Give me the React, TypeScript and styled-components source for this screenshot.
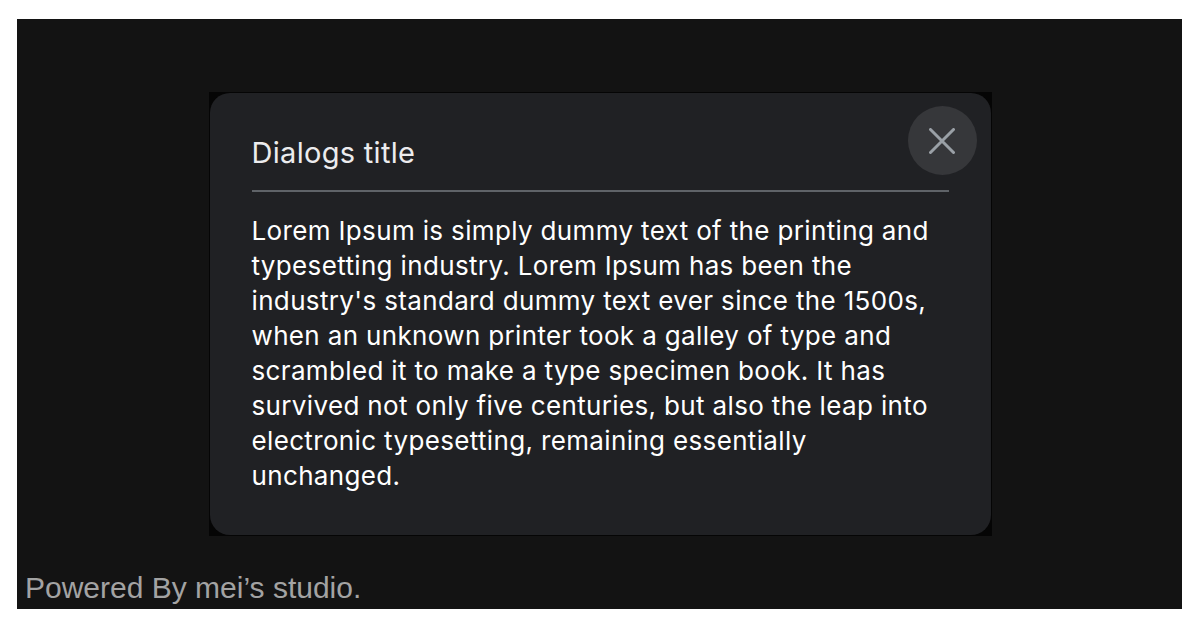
import styled, { createGlobalStyle } from "styled-components";

const GlobalStyle = createGlobalStyle`
  html, body {
    margin: 0;
    padding: 0;
    background: #ffffff;
  }
  body {
    font-family: Inter, "Noto Sans", sans-serif;
  }
`;

const Page = styled.div`
  padding: 19px 18px 21px 17px;
`;

const Stage = styled.div`
  height: 590px;
  background: #131313;
  display: flex;
  flex-direction: column;
  align-items: center;
  padding-top: 73px;
  box-sizing: border-box;
`;

const Backdrop = styled.div`
  margin-left: 1px;
  background: #050505;
  padding: 1px;
`;

const Dialog = styled.div`
  position: relative;
  width: 781px;
  height: 442px;
  box-sizing: border-box;
  background: #202124;
  border-radius: 20px;
  padding: 39px 42px 0 42px;
`;

const Title = styled.h2`
  margin: 0;
  padding-bottom: 16px;
  border-bottom: 2px solid #5f6368;
  font-family: Inter, "Noto Sans", sans-serif;
  font-weight: 400;
  font-size: 29px;
  letter-spacing: 0.3px;
  line-height: 42px;
  color: #ececee;
`;

const Body = styled.p`
  margin: 21px 0 0;
  font-family: Inter, "Noto Sans", sans-serif;
  font-size: 26px;
  letter-spacing: 0.35px;
  line-height: 35px;
  font-weight: 400;
  color: #ffffff;
`;

const CloseButton = styled.button`
  position: absolute;
  top: 13px;
  right: 14px;
  width: 69px;
  height: 69px;
  border: none;
  border-radius: 50%;
  background: #36373a;
  display: flex;
  align-items: center;
  justify-content: center;
  padding: 0;
  cursor: pointer;
`;

const Footer = styled.div`
  margin-top: auto;
  align-self: stretch;
  padding: 0 8px 4px;
  font-family: "Liberation Sans", Arial, sans-serif;
  font-size: 30px;
  line-height: 34px;
  color: #a3a3a3;
`;

export default function App() {
  return (
    <>
      <GlobalStyle />
      <Page>
        <Stage>
          <Backdrop>
            <Dialog>
              <Title>Dialogs title</Title>
              <Body>
                Lorem Ipsum is simply dummy text of the printing and typesetting
                industry. Lorem Ipsum has been the industry's standard dummy text
                ever since the 1500s, when an unknown printer took a galley of
                type and scrambled it to make a type specimen book. It has
                survived not only five centuries, but also the leap into
                electronic typesetting, remaining essentially unchanged.
              </Body>
              <CloseButton aria-label="Close">
                <svg width="26" height="26" viewBox="0 0 26 26">
                  <path
                    d="M1.5 1.5 L24.5 24.5 M24.5 1.5 L1.5 24.5"
                    stroke="#9aa0a6"
                    strokeWidth="3"
                    strokeLinecap="round"
                  />
                </svg>
              </CloseButton>
            </Dialog>
          </Backdrop>
          <Footer>Powered By mei’s studio.</Footer>
        </Stage>
      </Page>
    </>
  );
}
